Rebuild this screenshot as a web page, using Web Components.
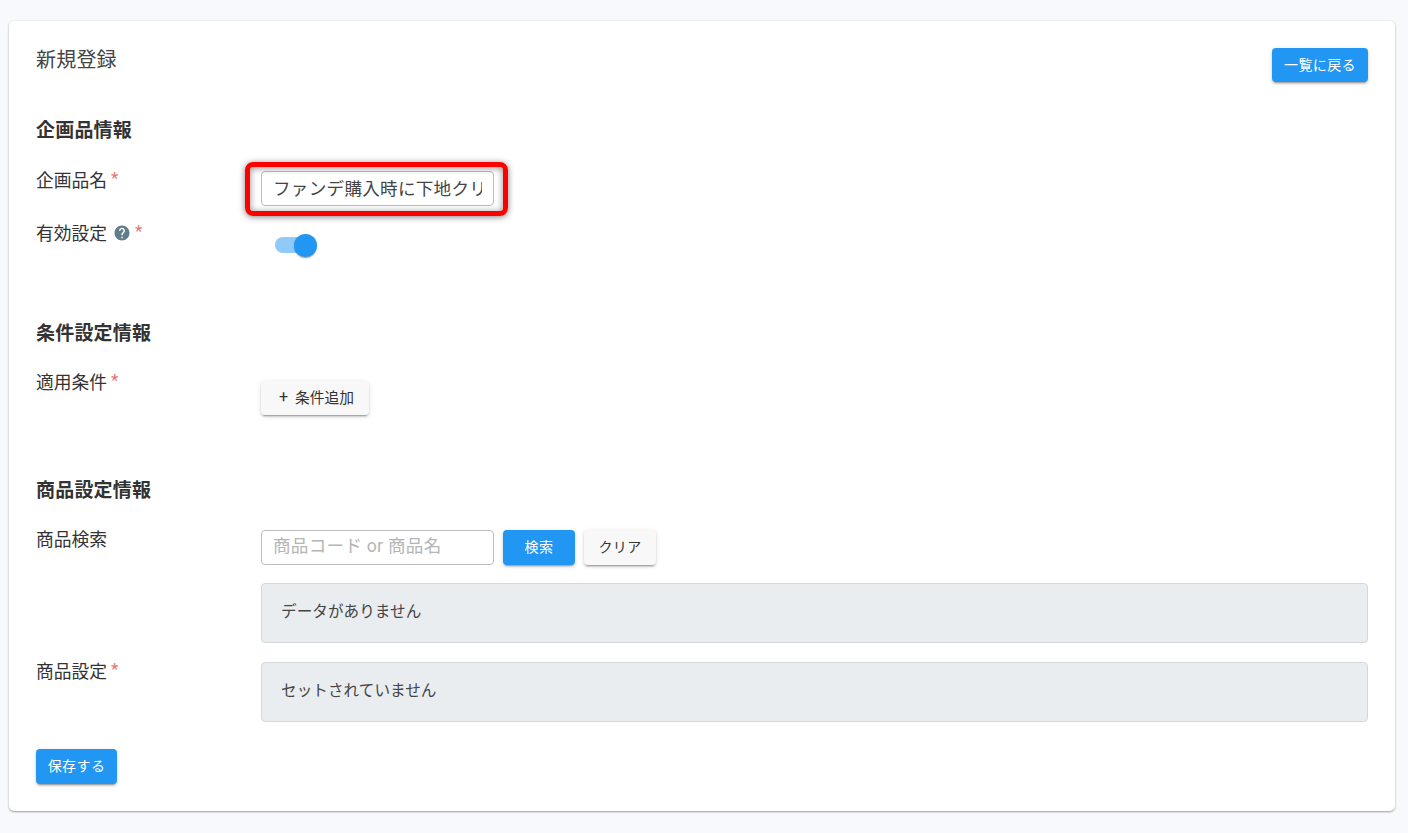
<!DOCTYPE html>
<html lang="ja">
<head>
<meta charset="utf-8">
<title>新規登録</title>
<style>
  html, body { margin: 0; height: 100%; }
  body {
    background: #f8f9fd; color: #333;
    font-family: Roboto, "Noto Sans CJK JP", sans-serif;
    padding: 21px 13px 22px 9px; box-sizing: border-box;
  }
</style>
</head>
<body>
<page-card>
  <card-header title="新規登録"><ui-button color="primary" w="96" h="34">一覧に戻る</ui-button></card-header>

  <section-title top="37">企画品情報</section-title>
  <form-row label="企画品名" required top="28">
    <highlight-box><text-field value="ファンデ購入時に下地クリームをプレゼント"></text-field></highlight-box>
  </form-row>
  <form-row label="有効設定" required help top="18">
    <toggle-switch style="margin-top:2px"></toggle-switch>
  </form-row>

  <section-title top="65">条件設定情報</section-title>
  <form-row label="適用条件" required top="27">
    <ui-button w="108" h="34" style="margin-top:8px;padding-left:3px;font-size:14.75px;letter-spacing:0"><span style="margin-right:7px;font-size:16px">+</span>条件追加</ui-button>
  </form-row>

  <section-title top="64">商品設定情報</section-title>
  <form-row label="商品検索" top="27">
    <search-bar></search-bar>
    <empty-panel style="margin-top:18px">データがありません</empty-panel>
  </form-row>
  <form-row label="商品設定" required top="19">
    <empty-panel>セットされていません</empty-panel>
  </form-row>

  <ui-button color="primary" w="81" h="35" style="margin-top:27px">保存する</ui-button>
</page-card>

<script>
class PageCard extends HTMLElement {
  constructor() {
    super();
    this.attachShadow({ mode: 'open' }).innerHTML = `
    <style>
      :host {
        display: block; box-sizing: border-box; height: 790px; padding: 27px 27px 0;
        background: #fff; border-radius: 5px;
        box-shadow: 0 1px 2px rgba(0,0,0,.35), 0 0 3px rgba(0,0,0,.06);
      }
    </style>
    <slot></slot>`;
  }
}

class CardHeader extends HTMLElement {
  constructor() {
    super();
    this.attachShadow({ mode: 'open' }).innerHTML = `
    <style>
      :host { display: flex; justify-content: space-between; align-items: flex-start; }
      h1 { margin: 0; font-size: 20px; font-weight: 400; line-height: 24px; letter-spacing: .2px; color: #444; }
    </style>
    <h1>${this.getAttribute('title')}</h1>
    <slot></slot>`;
  }
}

class SectionTitle extends HTMLElement {
  constructor() {
    super();
    this.attachShadow({ mode: 'open' }).innerHTML = `
    <style>
      :host {
        display: block; margin-top: ${this.getAttribute('top') || 0}px;
        font-size: 19px; font-weight: 700; line-height: 24px; letter-spacing: .2px; color: #333;
      }
    </style>
    <slot></slot>`;
  }
}

class FormRow extends HTMLElement {
  constructor() {
    super();
    const req = this.hasAttribute('required') ? '<span class="req">*</span>' : '';
    const help = this.hasAttribute('help') ? `
      <svg width="18" height="18" viewBox="0 0 24 24" fill="#607d8b"><path d="M12 2C6.48 2 2 6.48 2 12s4.48 10 10 10 10-4.48 10-10S17.52 2 12 2zm1 17h-2v-2h2v2zm2.07-7.75l-.9.92C13.45 12.9 13 13.5 13 15h-2v-.5c0-1.1.45-2.1 1.17-2.83l1.24-1.26c.37-.36.59-.86.59-1.41 0-1.1-.9-2-2-2s-2 .9-2 2H8c0-2.21 1.79-4 4-4s4 1.79 4 4c0 .88-.36 1.68-.93 2.25z"/></svg>` : '';
    this.attachShadow({ mode: 'open' }).innerHTML = `
    <style>
      :host {
        display: grid; grid-template-columns: 225px 1fr;
        margin-top: ${this.getAttribute('top') || 0}px;
      }
      .label {
        display: flex; align-items: center; align-self: start; height: 16px;
        font-size: 17.75px; color: #333;
      }
      svg { margin-left: 6px; margin-right: 2px; margin-top: 2px; flex: none; }
      .req { color: #e57373; margin-left: 4px; margin-top: -3px; font-size: 17px; }
      svg + .req { margin-left: 2px; }
      .body { min-width: 0; }
    </style>
    <div class="label">${this.getAttribute('label')}${help}${req}</div>
    <div class="body"><slot></slot></div>`;
  }
}

class UiButton extends HTMLElement {
  constructor() {
    super();
    const primary = this.getAttribute('color') === 'primary';
    this.attachShadow({ mode: 'open' }).innerHTML = `
    <style>
      :host {
        display: inline-flex; align-items: center; justify-content: center; box-sizing: border-box;
        width: ${this.getAttribute('w')}px; height: ${this.getAttribute('h')}px; padding-bottom: 3px;
        border-radius: 4px; font-size: 14px; white-space: nowrap; letter-spacing: .4px;
        background: ${primary ? '#2196f3' : '#f8f8f8'};
        color: ${primary ? '#fff' : '#333'};
        box-shadow: 0 3px 1px -2px rgba(0,0,0,.2), 0 2px 2px 0 rgba(0,0,0,.14), 0 1px 5px 0 rgba(0,0,0,.12);
      }
    </style>
    <slot></slot>`;
  }
}

class TextField extends HTMLElement {
  constructor() {
    super();
    this.attachShadow({ mode: 'open' }).innerHTML = `
    <style>
      :host { display: block; width: 233px; height: 35px; }
      input {
        box-sizing: border-box; width: 100%; height: 100%; padding: 0 11px 3px;
        border: 1px solid #bdbdbd; border-radius: 4px; outline: none; background: #fff;
        font: 400 17.6px Roboto, "Noto Sans CJK JP", sans-serif; letter-spacing: .25px; color: #444;
      }
      input::placeholder { color: #b5b5b5; opacity: 1; }
    </style>
    <input type="text" value="${this.getAttribute('value') || ''}" placeholder="${this.getAttribute('placeholder') || ''}">`;
  }
}

class HighlightBox extends HTMLElement {
  constructor() {
    super();
    this.attachShadow({ mode: 'open' }).innerHTML = `
    <style>
      :host { display: block; position: relative; width: 233px; }
      .mark {
        position: absolute; left: -16.5px; top: -9px; width: 263px; height: 54px; box-sizing: border-box;
        border: 5px solid #f00; border-radius: 8px; pointer-events: none;
        box-shadow: 0 1px 6px rgba(0,0,0,.5), inset 0 1px 7px rgba(0,0,0,.45);
      }
    </style>
    <slot></slot><div class="mark"></div>`;
  }
}

class ToggleSwitch extends HTMLElement {
  constructor() {
    super();
    this.attachShadow({ mode: 'open' }).innerHTML = `
    <style>
      :host { display: block; position: relative; width: 56px; height: 31px; }
      .track { position: absolute; left: 14px; top: 11px; width: 34px; height: 16px; border-radius: 8px; background: #90caf9; }
      .thumb {
        position: absolute; left: 33px; top: 8px; width: 23px; height: 23px; border-radius: 50%; background: #2196f3;
        box-shadow: 0 2px 1px -1px rgba(0,0,0,.2), 0 1px 1px 0 rgba(0,0,0,.14), 0 1px 3px 0 rgba(0,0,0,.12);
      }
    </style>
    <div class="track"></div><div class="thumb"></div>`;
  }
}

class SearchBar extends HTMLElement {
  constructor() {
    super();
    this.attachShadow({ mode: 'open' }).innerHTML = `
    <style>:host { display: flex; gap: 9px; align-items: flex-start; }</style>
    <text-field placeholder="商品コード or 商品名"></text-field>
    <ui-button color="primary" w="72" h="35">検索</ui-button>
    <ui-button w="72" h="35">クリア</ui-button>`;
  }
}

class EmptyPanel extends HTMLElement {
  constructor() {
    super();
    this.attachShadow({ mode: 'open' }).innerHTML = `
    <style>
      :host {
        display: flex; align-items: center; box-sizing: border-box; height: 60px; padding: 0 19px 7px;
        background: #eaedf0; border: 1px solid #d5d8da; border-radius: 4px;
        font-size: 15.6px; letter-spacing: .05px; color: #444;
      }
    </style>
    <slot></slot>`;
  }
}

customElements.define('page-card', PageCard);
customElements.define('card-header', CardHeader);
customElements.define('section-title', SectionTitle);
customElements.define('form-row', FormRow);
customElements.define('ui-button', UiButton);
customElements.define('text-field', TextField);
customElements.define('highlight-box', HighlightBox);
customElements.define('toggle-switch', ToggleSwitch);
customElements.define('search-bar', SearchBar);
customElements.define('empty-panel', EmptyPanel);
</script>
</body>
</html>
